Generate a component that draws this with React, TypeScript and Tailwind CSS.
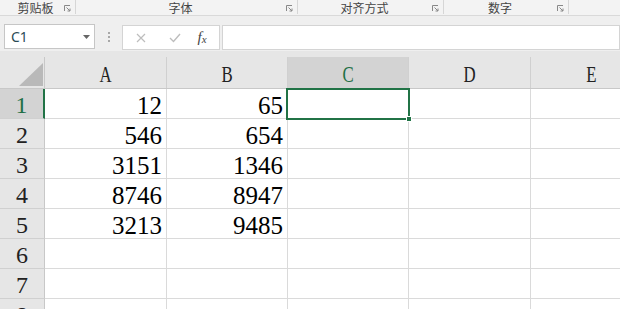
import React from "react";

const COLS = ["A", "B", "C", "D", "E"];
const WIDTHS = ["w-[122px]", "w-[121px]", "w-[121px]", "w-[122px]", "w-[121px]"];
const DATA: string[][] = [
  ["12", "65"],
  ["546", "654"],
  ["3151", "1346"],
  ["8746", "8947"],
  ["3213", "9485"],
  ["", ""],
  ["", ""],
  ["", ""],
];

function Launcher() {
  return (
    <svg width="7" height="7" viewBox="0 0 7 7" className="mt-[5px] ml-[1px]">
      <path d="M0.5 6V0.5H6" fill="none" stroke="#888" strokeWidth="1" />
      <path d="M2.5 2.5L6 6M6 3.5V6H3.5" fill="none" stroke="#888" strokeWidth="1" />
    </svg>
  );
}

function Group({ label, w, first }: { label: string; w: string; first?: boolean }) {
  return (
    <div className={`flex h-full ${w} ${first ? "pl-[8px]" : ""}`}>
      <div className="flex-1 text-center">{label}</div>
      <div className="w-[12px]">
        <Launcher />
      </div>
    </div>
  );
}

function Sep() {
  return <div className="w-px h-[14px] bg-[#d6d6d6]" />;
}

export default function App() {
  return (
    <div
      className="relative w-[620px] h-[309px] overflow-hidden bg-white"
      style={{ fontFamily: '"Noto Sans CJK SC", "Noto Sans", sans-serif' }}
    >
      {/* ribbon group labels */}
      <div className="flex h-[16px] bg-[#f3f3f3] border-b border-[#d9d9d9] text-[12px] leading-[15px] text-[#444]">
        <Group label="剪贴板" w="w-[75px]" first />
        <Sep />
        <Group label="字体" w="w-[221px]" />
        <Sep />
        <Group label="对齐方式" w="w-[145px]" />
        <Sep />
        <Group label="数字" w="w-[124px]" />
        <Sep />
        <div className="flex-1" />
      </div>

      {/* formula bar */}
      <div className="flex items-start h-[35px] bg-[#efefef] pt-[8px] pl-[4px]">
        <div className="w-[91px] h-[25px] bg-white border border-[#c6c6c6] flex items-center justify-between pl-[6px] pr-[4px]">
          <span className="text-[14px] text-[#2a4a55]" style={{ fontFamily: '"Noto Sans", sans-serif' }}>
            C1
          </span>
          <svg width="7" height="4" viewBox="0 0 7 4">
            <path d="M0 0H7L3.5 4Z" fill="#666" />
          </svg>
        </div>
        <div className="w-[27px] h-[25px] flex flex-col items-center justify-center gap-[2px]">
          <div className="w-[2px] h-[2px] bg-[#a8a8a8]" />
          <div className="w-[2px] h-[2px] bg-[#a8a8a8]" />
          <div className="w-[2px] h-[2px] bg-[#a8a8a8]" />
        </div>
        <div className="w-[98px] h-[25px] mt-[1px] bg-white border border-[#d4d4d4] flex items-center">
          <div className="w-[32px] flex justify-center pl-[3px]">
            <svg width="10" height="10" viewBox="0 0 10 10">
              <path d="M1 1L9 9M9 1L1 9" stroke="#bdbdbd" strokeWidth="1.2" />
            </svg>
          </div>
          <div className="w-[32px] flex justify-center pl-[8px]">
            <svg width="12" height="10" viewBox="0 0 12 10">
              <path d="M1 5L4.5 8.5L11 1" fill="none" stroke="#bdbdbd" strokeWidth="1.4" />
            </svg>
          </div>
          <div
            className="flex-1 flex justify-center pr-[2px] text-[15px] text-[#444] italic leading-none"
            style={{ fontFamily: '"Liberation Serif", serif' }}
          >
            <span>f</span>
            <span className="text-[11px] mt-[4px]">x</span>
          </div>
        </div>
        <div className="flex-1 ml-[2px] h-[25px] mt-[1px] bg-white border border-[#d4d4d4]" />
      </div>

      <div className="h-[6px] bg-[#e6e6e6]" />

      {/* grid */}
      <div className="relative" style={{ fontFamily: '"Liberation Serif", serif' }}>
        <div className="flex h-[32px] bg-[#e6e6e6] border-b border-[#c8c8c8]">
          <div className="w-[45px] shrink-0 border-r border-[#c8c8c8] flex items-end justify-end pr-[1px] pb-[2px]">
            <svg width="24" height="23" viewBox="0 0 24 23">
              <path d="M24 0V23H0Z" fill="#b9b9b9" />
            </svg>
          </div>
          {COLS.map((c, i) => (
            <div
              key={c}
              className={`${WIDTHS[i]} shrink-0 border-r border-[#d0d0d0] h-full pt-[5px] text-center leading-[24px] text-[24px] ${
                c === "C" ? "bg-[#d3d3d3] text-[#1f6f45]" : "text-[#222]"
              }`}
            >
              <span className="inline-block scale-x-[0.7]">{c}</span>
            </div>
          ))}
        </div>
        {DATA.map((row, r) => (
          <div key={r} className="flex h-[30px]">
            <div
              className={`w-[45px] shrink-0 border-b border-[#d0d0d0] h-full pt-[5px] text-center text-[24px] leading-[23px] ${
                r === 0
                  ? "bg-[#d3d3d3] border-r-2 border-r-[#217346] text-[#1f6f45]"
                  : "bg-[#e6e6e6] border-r border-r-[#c8c8c8] text-[#222]"
              }`}
            >
              {r + 1}
            </div>
            {COLS.map((c, i) => (
              <div
                key={c}
                className={`${WIDTHS[i]} shrink-0 h-full border-r border-b border-[#dadada] pt-[5px] text-right pr-[4px] text-[25px] leading-[23px] text-black`}
              >
                {i < 2 ? row[i] : ""}
              </div>
            ))}
          </div>
        ))}
        {/* selection */}
        <div className="absolute left-[286px] top-[31px] w-[124px] h-[32px] border-2 border-[#217346]" />
        <div className="absolute left-[406px] top-[59px] w-[6px] h-[6px] bg-[#217346] border border-white" />
      </div>
    </div>
  );
}
